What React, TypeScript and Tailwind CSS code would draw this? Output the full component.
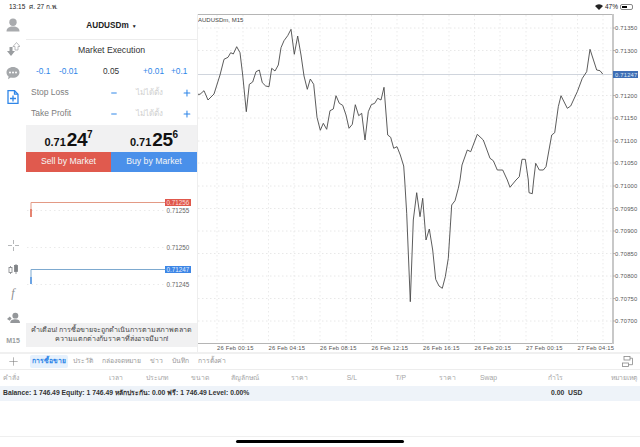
import React from "react";
import { Plus, Minus } from "lucide-react";

const seg = (ox: number, oy: number, pts: number[][]) => pts.map(([x, y]) => `${(ox + x / 3).toFixed(1)},${(oy + y / 3).toFixed(1)}`);

const line = [
  ...seg(198, 0, [[0, 283]]),
  ...seg(200, 0, [[0, 283],[12,272],[24,300],[42,282],[60,225],[72,178],[84,172],[92,158],[100,162],[110,140],[120,158],[128,225],[139,335],[148,253],[158,246],[168,215],[178,210],[187,248],[197,258],[207,260],[215,205],[225,213],[235,195],[243,143],[252,122],[263,107],[273,88],[283,163],[293,108],[303,165],[312,228],[322,268],[331,237],[341,253],[351,352],[361,391],[370,370],[380,388],[390,332],[400,327],[408,287],[418,310],[428,316],[438,345],[447,385],[457,373],[466,314],[476,347],[485,340],[495,420],[505,335],[514,314],[524,310],[533,295],[543,300],[552,262],[563,405],[572,412],[581,445],[591,440],[601,465],[611,498],[614,540]]),
  ...seg(200, 180, [[620,100],[631,365],[640,120],[650,38],[660,110]]),
  ...seg(420, 180, [[8,55],[18,180],[28,147],[38,210],[47,298],[57,318],[67,325],[76,290],[85,235],[95,75],[105,62],[115,25],[120,0]]),
  ...seg(420, 0, [[126,495],[142,450],[152,455],[172,403],[190,420],[210,475],[220,482],[232,510],[248,510],[262,540]]),
  ...seg(420, 180, [[270,22],[288,0]]),
  ...seg(420, 0, [[298,530],[306,478],[316,478],[325,540]]),
  ...seg(420, 180, [[327,38],[337,41],[341,0]]),
  ...seg(420, 0, [[347,490],[358,510],[370,510],[378,500],[395,405],[404,398],[415,320],[423,287],[442,325],[452,318],[472,275],[487,235],[500,215],[510,148],[530,210],[540,212],[548,222]]),
].join(" ");

const prices: [string, number][] = [
  ["0.71350", 28],["0.71300", 50.5],["0.71200", 95.5],["0.71150", 118],["0.71100", 141],["0.71050", 163],["0.71000", 186],["0.70950", 208.5],["0.70900", 231],["0.70850", 253.5],["0.70800", 276],["0.70750", 298.5],["0.70700", 321],
];
const times: [string, number][] = [
  ["26 Feb 00:15", 217],["26 Feb 04:15", 268.5],["26 Feb 08:15", 320],["26 Feb 12:15", 371.5],["26 Feb 16:15", 423],["26 Feb 20:15", 474.5],["27 Feb 00:15", 526],["27 Feb 04:15", 577.5],
];
const vgrid = [217,243,268.5,294,320,346,371.5,397,423,449,474.5,500,526,552,577.5,603];

const font = { fontFamily: '"Liberation Sans", Arial, sans-serif' };

function Chart() {
  return (
    <svg width={442} height={338} viewBox="198 14 442 338" className="block" style={font}>
      {vgrid.map((x) => (
        <line key={x} x1={x} x2={x} y1={15} y2={344} stroke="#e6e6e6" strokeWidth={0.8} strokeDasharray="1.5 2.5" />
      ))}
      {prices.map((p) => p[1]).map((y) => (
        <line key={y} x1={198} x2={613} y1={y} y2={y} stroke="#e2e2e2" strokeWidth={0.8} strokeDasharray="1.5 2.5" />
      ))}
      <line x1={198} x2={613} y1={74.5} y2={74.5} stroke="#d0d5dd" strokeWidth={1} />
      <line x1={198} x2={613} y1={14.5} y2={14.5} stroke="#b5b5b5" strokeWidth={1} />
      <line x1={198} x2={613} y1={343.5} y2={343.5} stroke="#b5b5b5" strokeWidth={1} />
      <line x1={613} x2={613} y1={14} y2={344} stroke="#c8c8c8" strokeWidth={2} />
      <polyline points={line} fill="none" stroke="#4a4a4a" strokeWidth={0.9} strokeLinejoin="round" />
      <text x={198} y={21.5} fontSize={6} fill="#444">AUDUSDm, M15</text>
      {prices.map(([t, y]) => (
        <g key={t}>
          <line x1={613} x2={615} y1={y} y2={y} stroke="#999" strokeWidth={0.7} />
          <text x={615} y={y + 2.2} fontSize={5.85} letterSpacing={0.2} fill="#555">{t}</text>
        </g>
      ))}
      <rect x={613} y={71} width={25} height={7} fill="#3f6fb5" />
      <text x={615} y={76.6} fontSize={5.85} letterSpacing={0.2} fill="#dfe8f5">0.71247</text>
      {times.map(([t, x]) => (
        <text key={t} x={x} y={349.5} fontSize={5.8} letterSpacing={0.2} fill="#555">{t}</text>
      ))}
    </svg>
  );
}

function MiniChart() {
  return (
    <svg width={171} height={151} viewBox="26 172 171 151" className="block" style={font}>
      {[210.5, 247.5, 284.5].map((y) => (
        <line key={y} x1={27} x2={165} y1={y} y2={y} stroke="#e4e4e4" strokeWidth={0.8} strokeDasharray="1.5 3" />
      ))}
      <polyline points="31,217 31,202.5 165,202.5" fill="none" stroke="#e39a85" strokeWidth={1} />
      <line x1={31} x2={31} y1={209} y2={217} stroke="#e0654f" strokeWidth={1.4} />
      <polyline points="31,284 31,269.5 165,269.5" fill="none" stroke="#7da9cf" strokeWidth={1} />
      <line x1={31} x2={31} y1={277} y2={284} stroke="#4a90e2" strokeWidth={1.4} />
      <rect x={165} y={199} width={26} height={7} fill="#e0584c" />
      <text x={166.5} y={205} fontSize={6.3} fill="#fbdcd8">0.71256</text>
      <text x={166.5} y={212.5} fontSize={6.3} fill="#666">0.71255</text>
      <text x={166.5} y={249.7} fontSize={6.3} fill="#666">0.71250</text>
      <rect x={165} y={266} width={26} height={7} fill="#3d86e6" />
      <text x={166.5} y={272} fontSize={6.3} fill="#e2efff">0.71247</text>
      <text x={166.5} y={286.7} fontSize={6.3} fill="#666">0.71245</text>
    </svg>
  );
}

function Quote({ a, b, c }: { a: string; b: string; c: string }) {
  return (
    <div className="flex items-start font-bold text-[#111] leading-none">
      <span className="text-[11px] mt-[7px]">{a}</span>
      <span className="text-[19px] tracking-[-0.5px] ml-[1px]">{b}</span>
      <span className="text-[10px]">{c}</span>
    </div>
  );
}

function Rail() {
  return (
    <div className="w-[26px] shrink-0 flex flex-col items-center justify-between pt-[4px] pb-[7px]">
      <div className="flex flex-col items-center gap-[10px]">
        <svg width="14" height="14" viewBox="0 0 14 14" fill="#a9abae">
          <circle cx="7" cy="4.200" r="3.700" />
          <path d="M0.500 13.500c0-3.500 2.500-5 6.500-5s6.500 1.500 6.500 5z" />
        </svg>
        <svg width="14" height="14" viewBox="0 0 14 14">
          <path d="M3.500 5v4H1l4 5 4-5H6.500V5z" fill="#9a9da0" />
          <path d="M9 8V4.500H7L10.500 0.500 14 4.500h-2V8z" fill="#fff" stroke="#a9abae" strokeWidth="0.8" />
        </svg>
        <svg width="14" height="14" viewBox="0 0 14 14">
          <path d="M7 1c3.600 0 6.500 2.400 6.500 5.400S10.600 11.800 7 11.800c-.8 0-1.500-.1-2.200-.3L2 13.200l.6-2.800C1.300 9.400.500 8 .500 6.400.500 3.400 3.400 1 7 1z" fill="#a5a8ab" />
          <circle cx="4" cy="6.400" r="1" fill="#fff" />
          <circle cx="7" cy="6.400" r="1" fill="#fff" />
          <circle cx="10" cy="6.400" r="1" fill="#fff" />
        </svg>
        <svg width="12" height="14" viewBox="0 0 12 14" fill="none" stroke="#2f86e8" strokeWidth="1.300">
          <path d="M1 .700h6.500L11 4.200v9.100H1z" />
          <path d="M7.500 .700v3.500H11M6 5.500v6M3 8.500h6" />
        </svg>
      </div>
      <div className="flex flex-col items-center gap-[11px]">
        <svg width="13" height="13" viewBox="0 0 13 13" stroke="#b5b7b9" strokeWidth="1" fill="none">
          <path d="M6.500 1v4M6.500 8v4M1 6.500h4M8 6.500h4" />
        </svg>
        <svg width="11" height="13" viewBox="0 0 11 13" fill="#7f8285" stroke="#7f8285" strokeWidth="0.8">
          <path d="M2.500 3v8" />
          <rect x="1" y="4.500" width="3" height="5" fill="#fff" />
          <path d="M8 1v10" />
          <rect x="6.500" y="2.500" width="3" height="6" />
        </svg>
        <span className="h-[13px] text-[12px] italic leading-[13px] text-[#8a8d90]" style={{ fontFamily: '"Liberation Serif", serif' }}>f</span>
        <svg width="13" height="13" viewBox="0 0 14 13" fill="#94979a">
          <circle cx="9" cy="4.500" r="3.200" />
          <path d="M3.500 12.500c0-3 2.500-4 5.500-4s5 1 5 4z" />
          <path d="M0 8l3-2.500L5 7.500 3 10z" />
        </svg>
        <span className="text-[7px] font-bold leading-[9px] text-[#9a9da0] mt-[1px]">M15</span>
      </div>
    </div>
  );
}

function Panel() {
  const rowCls = "h-[21px] shrink-0 flex items-center text-[8.500px] text-[#7d7d7d] pl-[5px] pr-[5px]";
  return (
    <div className="w-[171px] shrink-0 h-[333px] flex flex-col bg-white">
      <div className="h-[26px] shrink-0 flex items-center justify-center gap-[3px] border-b border-[#ececec] text-[8.200px] font-bold text-[#222]">
        AUDUSDm <span className="text-[5px]">▼</span>
      </div>
      <div className="h-[21px] shrink-0 flex items-center justify-center text-[8.700px] text-[#333]">Market Execution</div>
      <div className="h-[21px] shrink-0 flex items-center text-[8.300px] text-[#2f86e8]">
        <span className="ml-[10px] w-[23px]">-0.1</span>
        <span className="w-[44px]">-0.01</span>
        <span className="w-[40px] text-[#333]">0.05</span>
        <span className="w-[28px]">+0.01</span>
        <span>+0.1</span>
      </div>
      {["Stop Loss", "Take Profit"].map((t) => (
        <div key={t} className={rowCls}>
          <span className="w-[79px]">{t}</span>
          <Minus size={8} className="text-[#2f86e8]" strokeWidth={3} />
          <span className="w-[65px] text-center text-[#cfcfcf] text-[8px] whitespace-nowrap">ไม่ได้ตั้ง</span>
          <Plus size={10} className="text-[#2f86e8]" strokeWidth={2.5} />
        </div>
      ))}
      <div className="h-[27px] mt-[1px] pt-[2px] shrink-0 bg-[#f1f1f2] flex items-center">
        <div className="w-[85px] flex justify-center"><Quote a="0.71" b="24" c="7" /></div>
        <div className="w-[86px] flex justify-center"><Quote a="0.71" b="25" c="6" /></div>
      </div>
      <div className="h-[20px] shrink-0 flex text-[8.700px] text-[#f5f5f5]">
        <div className="w-[85px] bg-[#e05a4e] flex items-center justify-center">Sell by Market</div>
        <div className="w-[86px] bg-[#4a90ea] flex items-center justify-center">Buy by Market</div>
      </div>
      <div className="h-[151px] shrink-0"><MiniChart /></div>
      <div className="flex-1 bg-[#f1f1f2] flex flex-col items-center justify-center text-[7.100px] leading-[9px] text-[#444] whitespace-nowrap">
        <span>คำเตือน! การซื้อขายจะถูกดำเนินการตามสภาพตลาด</span>
        <span>ความแตกต่างกับราคาที่ส่งอาจมีมาก!</span>
      </div>
    </div>
  );
}

const tabs = ["ประวัติ", "กล่องจดหมาย", "ข่าว", "บันทึก", "การตั้งค่า"];
const cols: [string, string][] = [
  ["คำสั่ง", "w-[75px] text-left"],["เวลา", "w-[45px] text-right"],["ประเภท", "w-[45px] text-right"],["ขนาด", "w-[41px] text-right"],["สัญลักษณ์", "w-[50px] text-right"],["ราคา", "w-[49px] text-right"],["S/L", "w-[49px] text-right"],["T/P", "w-[49px] text-right"],["ราคา", "w-[50px] text-right"],["Swap", "w-[41px] text-right"],["กำไร", "w-[66px] text-right"],["หมายเหตุ", "w-[74px] text-right"],
];

export default function App() {
  return (
    <div className="w-[640px] h-[447px] overflow-hidden bg-white flex flex-col" style={font}>
      <div className="h-[14px] shrink-0 flex items-center justify-between pl-[9px] pr-[7px] text-[6.500px] text-[#222]">
        <div className="flex gap-[4px]"><span>13:15</span><span>ศ. 27 ก.พ.</span></div>
        <div className="flex items-center gap-[2px]">
          <svg width="8" height="6" viewBox="0 0 8 6" fill="#222"><path d="M0 2a5.600 5.600 0 0 1 8 0L4 6z" /></svg>
          <span>47%</span>
          <div className="w-[13px] h-[6px] border border-[#888] rounded-[2px] p-[1px]"><div className="w-[5px] h-full bg-black" /></div>
        </div>
      </div>
      <div className="h-[338px] shrink-0 flex">
        <Rail />
        <Panel />
        <div className="w-px shrink-0 bg-[#eeeeee]" />
        <Chart />
      </div>
      <div className="h-[2px] shrink-0 bg-[#f0f0f0]" />
      <div className="h-[16px] shrink-0 flex items-center border-b border-[#ededed] text-[6.800px] text-[#9a9a9a] whitespace-nowrap">
        <Plus size={13} strokeWidth={1} className="ml-[7px] mr-[10px] text-[#777]" />
        <span className="h-[13px] w-[38px] flex items-center justify-center rounded-[2px] bg-[#e6f1fd] text-[#2f86e8] font-bold">การซื้อขาย</span>
        <div className="flex gap-[9px] ml-[5px]">
          {tabs.map((t) => <span key={t}>{t}</span>)}
        </div>
        <svg width="11" height="11" viewBox="0 0 11 11" fill="none" stroke="#888" strokeWidth="0.8" className="ml-auto mr-[7px]">
          <rect x="2" y="0.500" width="6" height="3.500" />
          <rect x="0.500" y="7" width="6" height="3.500" />
          <path d="M8 2.200h2.500v6.500h-4" />
        </svg>
      </div>
      <div className="h-[16px] shrink-0 flex items-center pl-[3px] text-[6.800px] text-[#a5a5a5] whitespace-nowrap">
        {cols.map(([t, c], i) => <span key={i} className={c}>{t}</span>)}
      </div>
      <div className="h-[15px] shrink-0 flex items-center justify-between pl-[3px] bg-[#eef3f9] text-[6.800px] font-bold text-[#333] whitespace-nowrap">
        <span>Balance: 1 746.49 Equity: 1 746.49 หลักประกัน: 0.00 ฟรี: 1 746.49 Level: 0.00%</span>
        <span className="w-[89px]">0.00&nbsp; USD</span>
      </div>
      <div className="h-[36px] shrink-0 border-b border-[#efefef]" />
      <div className="flex-1 flex justify-center pt-[3px]">
        <div className="w-[168px] h-[3px] rounded-full bg-black" />
      </div>
    </div>
  );
}
